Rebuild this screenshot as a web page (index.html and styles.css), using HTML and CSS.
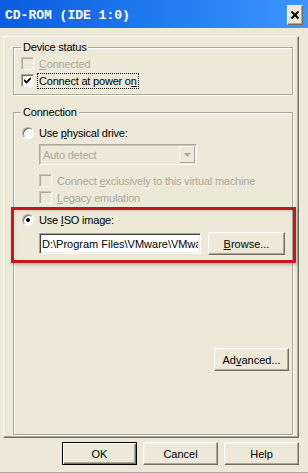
FILE: index.html
```html
<!DOCTYPE html>
<html lang="en">
<head>
    <meta charset="UTF-8">
    <title>CD-ROM (IDE 1:0)</title>
    <link rel="stylesheet" href="styles.css">
</head>
<body>
<div class="window">
    <div class="titlebar">
        <span class="title">CD-ROM (IDE 1:0)</span>
        <span class="close">
            <svg width="8" height="8" viewBox="0 0 8 8"><path d="M0.5 0.5L7.5 7.5M7.5 0.5L0.5 7.5" stroke="#000" stroke-width="2"/></svg>
        </span>
    </div>

    <div class="page">
        <fieldset class="group status">
            <legend>Device status</legend>
            <div class="row disabled">
                <span class="check"></span>
                <span><u>C</u>onnected</span>
            </div>
            <div class="row">
                <span class="check">
                    <svg width="7" height="7" viewBox="0 0 7 7"><path d="M0 3L2.5 5.4L7 0.9" fill="none" stroke="#000" stroke-width="1.8"/></svg>
                </span>
                <span class="focus">Connect at power o<u>n</u></span>
            </div>
        </fieldset>

        <fieldset class="group connection">
            <legend>Connection</legend>
            <div class="row">
                <span class="radio"></span>
                <span>Use <u>p</u>hysical drive:</span>
            </div>
            <div class="combo">
                <span>Auto detect</span>
                <span class="combo-btn">
                    <svg width="7" height="4" viewBox="0 0 7 4"><path d="M0 0H7L3.5 4Z" fill="#aca899"/></svg>
                </span>
            </div>
            <div class="row sub disabled">
                <span class="check"></span>
                <span>Connect <u>e</u>xclusively to this virtual machine</span>
            </div>
            <div class="row sub disabled">
                <span class="check"></span>
                <span><u>L</u>egacy emulation</span>
            </div>
            <div class="row iso">
                <span class="radio on"></span>
                <span>Use <u>I</u>SO image:</span>
            </div>
            <div class="file-row">
                <input class="path" type="text" value="D:\Program Files\VMware\VMware Workstation\windows.iso">
                <button class="btn browse"><u>B</u>rowse...</button>
            </div>
            <div class="advanced-row">
                <button class="btn">Ad<u>v</u>anced...</button>
            </div>
        </fieldset>
    </div>

    <div class="buttons">
        <button class="btn default">OK</button>
        <button class="btn">Cancel</button>
        <button class="btn">Help</button>
    </div>

    <!-- red marker drawn over the ISO option -->
    <div class="highlight"></div>
</div>
</body>
</html>
```

FILE: styles.css
```css
* {
    box-sizing: border-box;
}

body {
    margin: 0;
    background: #ece9d8;
    font-family: "Liberation Sans", Arial, sans-serif;
    font-size: 11px;
    letter-spacing: -0.2px;
    color: #000;
}

.window {
    position: relative;
    width: 308px;
    height: 473px;
    border-bottom: 1px solid #aca899;
}

/* title bar */
.titlebar {
    height: 28px;
    display: flex;
    align-items: center;
    justify-content: space-between;
    padding: 1px 5px 0 5px;
    background: linear-gradient(to right, #0b5ce0, #2480f2 60%, #3d95ff);
}

.title {
    padding-top: 2px;
    color: #fff;
    letter-spacing: 0;
    font: bold 13px "Liberation Mono", monospace;
}

.close {
    width: 16px;
    height: 20px;
    display: flex;
    align-items: center;
    justify-content: center;
    background: #ece9d8;
    border: 1px solid;
    border-color: #fff #716f64 #716f64 #fff;
    box-shadow: inset -1px -1px 0 #aca899;
}

/* property page */
.page {
    width: 296px;
    height: 402px;
    margin: 8px 0 0 3px;
    padding: 4px 0 0 9px;
    border: 1px solid;
    border-color: #fff #716f64 #716f64 #fff;
    box-shadow: inset -1px -1px 0 #aca899;
}

.group {
    width: 280px;
    margin: 0;
    padding: 1px 3px 5px 7px;
    border: 1px solid #aca899;
    box-shadow: 1px 1px 0 #fff, inset 1px 1px 0 #fff;
}

.group legend {
    padding: 0 2px;
    line-height: 13px;
    background: #ece9d8;
}

.status {
    margin-bottom: 11px;
}

.connection {
    padding-top: 5px;
    padding-bottom: 63px;
}

.row {
    display: flex;
    align-items: center;
    gap: 5px;
    height: 17px;
}

.row.sub {
    margin-left: 18px;
}

.combo + .row.sub {
    margin-top: 7px;
}

.row.iso {
    margin-top: 5px;
}

.disabled {
    color: #aca899;
}

/* checkbox and radio */
.check {
    width: 13px;
    height: 13px;
    display: flex;
    align-items: center;
    justify-content: center;
    background: #fff;
    border: 1px solid;
    border-color: #aca899 #fff #fff #aca899;
    box-shadow: inset 1px 1px 0 #716f64, inset -1px -1px 0 #f1efe2;
}

.disabled .check {
    background: #ece9d8;
    border-color: #c9c7ba #fff #fff #c9c7ba;
    box-shadow: inset 1px 1px 0 #aca899;
}

.radio {
    width: 12px;
    height: 12px;
    margin-left: 1px;
    display: flex;
    align-items: center;
    justify-content: center;
    border-radius: 50%;
    background: #fff;
    border: 1px solid;
    border-color: #aca899 #fff #fff #aca899;
    box-shadow: inset 1px 1px 0 #716f64;
}

.radio.on::after {
    content: "";
    width: 4px;
    height: 4px;
    border-radius: 50%;
    background: #000;
}

.focus {
    margin-left: -2px;
    padding: 0 1px;
    line-height: 14px;
    border: 1px dotted #000;
}

/* combo box (disabled) */
.combo {
    display: flex;
    align-items: center;
    justify-content: space-between;
    width: 158px;
    height: 21px;
    margin: 3px 0 0 18px;
    padding: 1px 1px 1px 3px;
    color: #aca899;
    border: 1px solid;
    border-color: #aca899 #fff #fff #aca899;
    box-shadow: inset 1px 1px 0 #c9c7ba;
}

.combo-btn {
    width: 16px;
    height: 17px;
    display: flex;
    align-items: center;
    justify-content: center;
    border: 1px solid;
    border-color: #fff #aca899 #aca899 #fff;
}

/* iso path */
.file-row {
    display: flex;
    align-items: center;
    gap: 7px;
    margin: 4px 0 0 18px;
}

.path {
    width: 162px;
    height: 21px;
    padding: 0 2px;
    font: inherit;
    color: #000;
    background: #fff;
    border: 1px solid;
    border-color: #aca899 #fff #fff #aca899;
    box-shadow: inset 1px 1px 0 #404040, inset -1px -1px 0 #f1efe2;
    outline: none;
}

.btn {
    width: 75px;
    height: 23px;
    padding: 0;
    font: inherit;
    color: #000;
    background: #ece9d8;
    border: 1px solid;
    border-color: #fff #716f64 #716f64 #fff;
    box-shadow: inset -1px -1px 0 #aca899, inset 1px 1px 0 #f1efe2;
}

.btn.browse {
    width: 77px;
}

.btn.default {
    border-color: #000;
    box-shadow: inset 1px 1px 0 #fff, inset -1px -1px 0 #716f64, inset -2px -2px 0 #aca899;
}

.advanced-row {
    display: flex;
    justify-content: flex-end;
    margin-top: 93px;
}

.buttons {
    display: flex;
    justify-content: flex-end;
    gap: 6px;
    margin: 4px 9px 0 0;
}

.highlight {
    position: absolute;
    left: 11px;
    top: 207px;
    width: 285px;
    height: 56px;
    border: 3px solid #c8141c;
    box-shadow: 1px 2px 3px rgba(0, 0, 0, 0.2), inset 1px 1px 3px rgba(0, 0, 0, 0.12);
}
```
